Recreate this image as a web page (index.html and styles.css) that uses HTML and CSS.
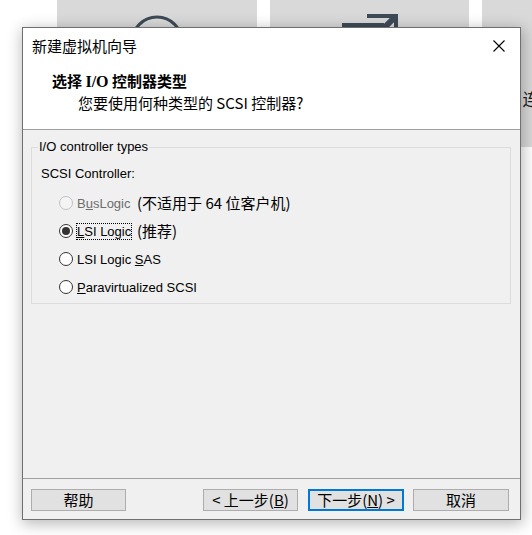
FILE: index.html
```html
<!DOCTYPE html>
<html lang="zh-CN">
<head>
<meta charset="utf-8">
<title>新建虚拟机向导</title>
<link rel="stylesheet" href="styles.css">
</head>
<body>
<div class="desktop">
  <div class="tiles">
    <div class="tile">
      <svg class="tile-icon" viewBox="0 0 56 56" width="56" height="56">
        <circle cx="28" cy="28" r="25" fill="none" stroke="#3d4b57" stroke-width="3"/>
        <path d="M28 16v24M16 28h24" stroke="#3d4b57" stroke-width="3"/>
      </svg>
    </div>
    <div class="tile">
      <svg class="tile-icon" viewBox="0 0 56 56" width="56" height="56">
        <path d="M25 -2 H58 V4 H25 Z" fill="#3d4b57"/>
        <path d="M52 0 H58 V30 H52 Z" fill="#3d4b57"/>
        <path d="M55 1 L36 20" stroke="#3d4b57" stroke-width="6"/>
        <path d="M0 9 H42 V13 H4 V56 H0 Z" fill="#3d4b57"/>
      </svg>
    </div>
    <div class="tile">
      <svg class="tile-icon" viewBox="0 0 56 56" width="56" height="56">
        <rect x="6" y="10" width="44" height="30" fill="none" stroke="#3d4b57" stroke-width="3"/>
      </svg>
      <div class="tile-label">连接远程服务器</div>
    </div>
  </div>

  <div class="dialog">
    <div class="titlebar">
      <span class="title">新建虚拟机向导</span>
      <span class="close">
        <svg viewBox="0 0 12 12" width="12" height="12"><path d="M0.5 0.5 L11.5 11.5 M11.5 0.5 L0.5 11.5" stroke="#000" stroke-width="1.1" fill="none"/></svg>
      </span>
    </div>
    <div class="header">
      <div class="h-title">选择 <span class="serif">I/O</span> 控制器类型</div>
      <div class="h-sub">您要使用何种类型的 SCSI 控制器?</div>
    </div>
    <div class="body">
      <fieldset class="group">
        <legend>I/O controller types</legend>
        <div class="group-label">SCSI Controller:</div>
        <div class="options">
          <div class="opt disabled">
            <span class="radio"></span>
            <span class="opt-main fixed">B<u>u</u>sLogic</span>
            <span class="note">(不适用于 64 位客户机)</span>
          </div>
          <div class="opt">
            <span class="radio checked"></span>
            <span class="opt-main fixed"><span class="focus"><u>L</u>SI Logic</span></span>
            <span class="note">(推荐)</span>
          </div>
          <div class="opt">
            <span class="radio"></span>
            <span class="opt-main">LSI Logic <u>S</u>AS</span>
          </div>
          <div class="opt">
            <span class="radio"></span>
            <span class="opt-main"><u>P</u>aravirtualized SCSI</span>
          </div>
        </div>
      </fieldset>
    </div>
    <div class="footer">
      <button class="btn">帮助</button>
      <span class="spacer"></span>
      <button class="btn">&lt; 上一步(<u>B</u>)</button>
      <button class="btn default">下一步(<u>N</u>) &gt;</button>
      <button class="btn">取消</button>
    </div>
  </div>
</div>
</body>
</html>
```

FILE: styles.css
```css
html, body {
  margin: 0;
  padding: 0;
}

body {
  width: 532px;
  height: 535px;
  overflow: hidden;
  background: #ffffff;
  font-family: "Liberation Sans", "Noto Sans CJK SC", sans-serif;
  font-size: 13px;
  color: #000;
}

.desktop {
  position: relative;
  width: 532px;
  height: 535px;
  overflow: hidden;
}

.tiles {
  display: flex;
  gap: 13px;
  padding-left: 57px;
}

.tile {
  flex: 0 0 auto;
  width: 200px;
  height: 147px;
  background: #d9d9d9;
  display: flex;
  flex-direction: column;
  align-items: center;
}

.tile:nth-child(2) {
  width: 199px;
}

.tile-icon {
  margin-top: 14px;
  display: block;
}

.tile-label {
  margin-top: 17px;
  font-family: "Noto Sans CJK SC", sans-serif;
  font-size: 17px;
  line-height: 24px;
  color: #1e1e1e;
  white-space: nowrap;
}

/* dialog window over the desktop */
.dialog {
  position: absolute;
  left: 22px;
  top: 27px;
  width: 499px;
  height: 493px;
  box-sizing: border-box;
  border: 1px solid #6f6f6f;
  background: #f0f0f0;
  display: flex;
  flex-direction: column;
  box-shadow: 1px 3px 14px 1px rgba(0, 0, 0, 0.28);
}

.titlebar {
  height: 36px;
  flex: 0 0 auto;
  background: #fff;
  display: flex;
  align-items: center;
  padding-left: 9px;
}

.title {
  flex: 1;
  font-family: "Noto Sans CJK SC", sans-serif;
  font-size: 15px;
  line-height: 20px;
}

.close {
  width: 42px;
  height: 36px;
  display: flex;
  align-items: center;
  justify-content: center;
}

.close svg {
  display: block;
}

.header {
  flex: 0 0 auto;
  height: 66px;
  box-sizing: border-box;
  background: #fff;
  border-bottom: 1px solid #a0a0a0;
  padding-top: 7px;
  font-family: "Noto Sans CJK SC", sans-serif;
  font-size: 15px;
}

.h-title {
  padding-left: 29px;
  font-weight: bold;
  line-height: 20px;
}

.serif {
  font-family: "Liberation Serif", serif;
  font-size: 16px;
}

.h-sub {
  padding-left: 55px;
  line-height: 22px;
}

.body {
  flex: 0 0 auto;
  height: 349px;
  box-sizing: border-box;
  border-bottom: 1px solid #a0a0a0;
  padding-top: 9px;
}

.group {
  margin: 0 9px 0 8px;
  padding: 0 0 2px 9px;
  border: 1px solid #dcdcdc;
  min-width: 0;
}

.group legend {
  margin-left: -3px;
  padding: 0 1px;
  line-height: 16px;
}

.group-label {
  margin-top: 9px;
  line-height: 20px;
}

.options {
  margin-top: 5px;
  display: flex;
  flex-direction: column;
}

.opt {
  height: 28px;
  display: flex;
  align-items: center;
  padding-left: 18px;
  white-space: nowrap;
}

.radio {
  width: 14px;
  height: 14px;
  box-sizing: border-box;
  border: 1px solid #333;
  border-radius: 50%;
  background: #fff;
  display: flex;
  align-items: center;
  justify-content: center;
  flex: 0 0 auto;
}

.radio.checked::after {
  content: "";
  width: 8px;
  height: 8px;
  border-radius: 50%;
  background: #333;
}

.opt-main {
  margin-left: 4px;
  line-height: 17px;
}

.opt-main.fixed {
  width: 60px;
  flex: 0 0 auto;
}

.focus {
  outline: 1px dotted #000;
}

.note {
  font-family: "Noto Sans CJK SC", sans-serif;
  font-size: 15px;
  line-height: 20px;
}

.disabled .radio {
  border-color: #c2c2c2;
  background: #f4f4f4;
}

.disabled .opt-main {
  color: #6d6d6d;
}

.footer {
  flex: 1;
  display: flex;
  align-items: flex-start;
  padding: 10px 11px 0 8px;
}

.spacer {
  flex: 1;
}

.btn {
  width: 95px;
  height: 22px;
  box-sizing: border-box;
  margin: 0;
  padding: 0;
  background: #e1e1e1;
  border: 1px solid #adadad;
  font-family: "Noto Sans CJK SC", sans-serif;
  font-size: 15px;
  line-height: 18px;
  color: #000;
  display: flex;
  align-items: center;
  justify-content: center;
}

.btn + .btn {
  margin-left: 10px;
}

.btn.default {
  width: 96px;
  border: 2px solid #0078d7;
}

.btn.default + .btn {
  margin-left: 9px;
  width: 96px;
}
```
